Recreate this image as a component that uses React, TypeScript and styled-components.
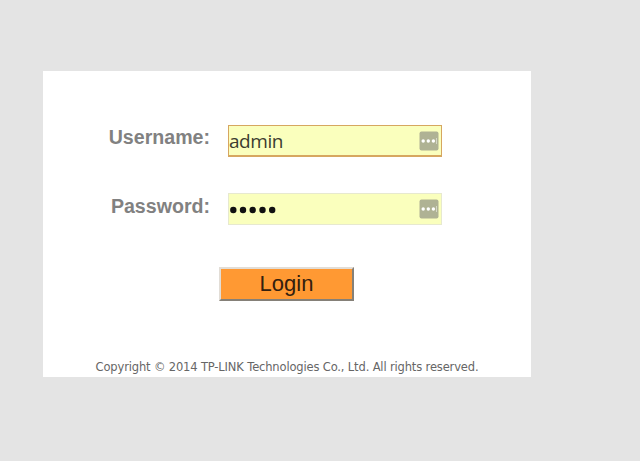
import React from "react";
import styled, { createGlobalStyle } from "styled-components";

const GlobalStyle = createGlobalStyle`
  *, *::before, *::after { box-sizing: border-box; }
  body { margin: 0; background: #e4e4e4; }
`;

const Page = styled.main`
  min-height: 461px;
  padding: 71px 0 0 43px;
  background: #e4e4e4;
`;

const LoginPanel = styled.form`
  display: flex;
  flex-direction: column;
  width: 488px;
  height: 306px;
  padding-top: 54px;
  background: #fff;
`;

const Row = styled.div`
  display: grid;
  grid-template-columns: 167px 214px;
  column-gap: 18px;
  height: 32px;
  margin-bottom: 36px;
`;

const Label = styled.label<{ $lineHeight?: number }>`
  font: bold 19.6px/1 "Liberation Sans", Arial, sans-serif;
  line-height: ${(p) => p.$lineHeight ?? 25}px;
  color: #818181;
  text-align: right;
  white-space: nowrap;
`;

const Field = styled.div<{ $active?: boolean }>`
  display: flex;
  align-items: center;
  justify-content: space-between;
  padding-right: 2px;
  background: #faffbd;
  border: 1px solid ${(p) => (p.$active ? "#d6a760" : "#e7e9cf")};
  border-bottom-width: ${(p) => (p.$active ? 2 : 1)}px;
`;

const Value = styled.span`
  font: 19px/28px "Open Sans", sans-serif;
  letter-spacing: -0.45px;
  color: #3c3c30;
`;

const Drawing = styled.svg`
  display: block;
`;

const LoginButton = styled.button`
  width: 135px;
  height: 34px;
  margin: 6px 0 0 176px;
  padding: 0;
  font: 22px/28px "Liberation Sans", Arial, sans-serif;
  color: #33200f;
  background: #ff9933;
  border: 2px solid;
  border-color: #e2ddd6 #858078 #858078 #e2ddd6;
`;

const Copyright = styled.footer`
  margin-top: 57px;
  font: 11.5px/18px "DejaVu Sans", Verdana, sans-serif;
  letter-spacing: -0.15px;
  color: #666;
  text-align: center;
  white-space: nowrap;
`;

function PasswordDots() {
  return (
    <Drawing width="48" height="10" viewBox="0 0 48 10" fill="#111">
      {[4.3, 14, 23.7, 33.5, 43.2].map((x) => (
        <circle key={x} cx={x} cy="6" r="3.2" />
      ))}
    </Drawing>
  );
}

function ManagerIcon() {
  return (
    <Drawing width="20" height="20" viewBox="0 0 20 20">
      <rect x="0.5" y="0.5" width="19" height="19" rx="2" fill="#afb294" />
      <g fill="#fff">
        <circle cx="4.2" cy="10" r="1.7" />
        <circle cx="9.3" cy="10" r="1.7" />
        <circle cx="14.4" cy="10" r="1.7" />
        <rect x="17.2" y="7" width="0.8" height="6" opacity="0.6" />
      </g>
    </Drawing>
  );
}

export default function App() {
  return (
    <Page>
      <GlobalStyle />
      <LoginPanel>
        <Row>
          <Label>Username:</Label>
          <Field $active>
            <Value>admin</Value>
            <ManagerIcon />
          </Field>
        </Row>
        <Row>
          <Label $lineHeight={27}>Password:</Label>
          <Field>
            <PasswordDots />
            <ManagerIcon />
          </Field>
        </Row>
        <LoginButton type="button">Login</LoginButton>
        <Copyright>Copyright © 2014 TP-LINK Technologies Co., Ltd. All rights reserved.</Copyright>
      </LoginPanel>
    </Page>
  );
}
